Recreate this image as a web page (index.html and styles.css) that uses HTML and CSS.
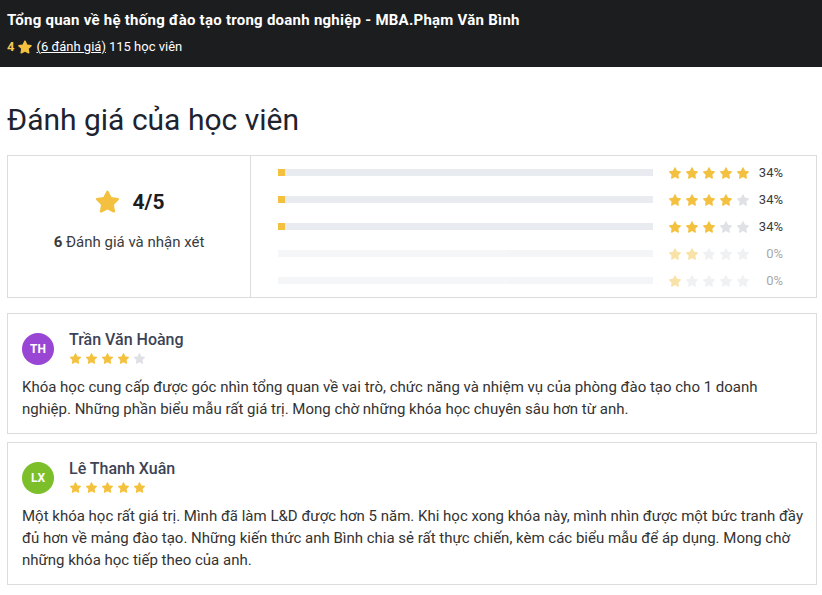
FILE: index.html
```html
<!DOCTYPE html>
<html lang="vi">
  <head>
    <meta charset="UTF-8" />
    <title>Đánh giá của học viên</title>
    <link rel="stylesheet" href="styles.css">
  </head>
  <body>
    <svg class="defs" width="0" height="0">
      <symbol id="star" viewBox="0 0 24 24">
        <path d="M12 2.2c.4 0 .7.2.9.6l2.6 5.3 5.8.8c.9.1 1.2 1.2.6 1.8l-4.2 4.1 1 5.8c.2.9-.8 1.6-1.6 1.1L12 19l-5.2 2.7c-.8.5-1.8-.2-1.6-1.1l1-5.8-4.2-4.1c-.6-.6-.3-1.7.6-1.8l5.8-.8 2.6-5.3c.2-.4.5-.6 1-.6z"/>
      </symbol>
    </svg>

    <header class="course-bar">
      <h1 class="course-title">Tổng quan về hệ thống đào tạo trong doanh nghiệp - MBA.Phạm Văn Bình</h1>
      <div class="course-meta">
        <span class="meta-score">4</span>
        <svg class="meta-star"><use href="#star"/></svg>
        <a href="#reviews">(6 đánh giá)</a> 115 học viên
      </div>
    </header>

    <main class="content" id="reviews">
      <h2 class="page-title">Đánh giá của học viên</h2>

      <!-- rating summary -->
      <section class="summary">
        <div class="summary-score">
          <div class="score-line">
            <svg class="score-star"><use href="#star"/></svg>
            <span class="score-value">4/5</span>
          </div>
          <p class="score-count"><b>6</b> Đánh giá và nhận xét</p>
        </div>
        <div class="summary-bars" id="bars"></div>
      </section>

      <!-- reviews -->
      <article class="review">
        <div class="review-head">
          <span class="avatar avatar-purple">TH</span>
          <div>
            <div class="review-name">Trần Văn Hoàng</div>
            <div class="stars small" data-rating="4"></div>
          </div>
        </div>
        <p class="review-text">Khóa học cung cấp được góc nhìn tổng quan về vai trò, chức năng và nhiệm vụ của phòng đào tạo cho 1 doanh nghiệp. Những phần biểu mẫu rất giá trị. Mong chờ những khóa học chuyên sâu hơn từ anh.</p>
      </article>

      <article class="review">
        <div class="review-head">
          <span class="avatar avatar-green">LX</span>
          <div>
            <div class="review-name">Lê Thanh Xuân</div>
            <div class="stars small" data-rating="5"></div>
          </div>
        </div>
        <p class="review-text">Một khóa học rất giá trị. Mình đã làm L&amp;D được hơn 5 năm. Khi học xong khóa này, mình nhìn được một bức tranh đầy đủ hơn về mảng đào tạo. Những kiến thức anh Bình chia sẻ rất thực chiến, kèm các biểu mẫu để áp dụng. Mong chờ những khóa học tiếp theo của anh.</p>
      </article>
    </main>

    <script>
      const breakdown = [
        { stars: 5, percent: 34 },
        { stars: 4, percent: 34 },
        { stars: 3, percent: 34 },
        { stars: 2, percent: 0 },
        { stars: 1, percent: 0 },
      ];

      function starIcons(count) {
        let html = "";
        for (let i = 1; i <= 5; i++) {
          const cls = i <= count ? "on" : "off";
          html += '<svg class="' + cls + '"><use href="#star"/></svg>';
        }
        return html;
      }

      const bars = document.getElementById("bars");
      breakdown.forEach((row) => {
        const div = document.createElement("div");
        div.className = "bar-row" + (row.percent === 0 ? " empty" : "");
        div.innerHTML =
          '<div class="bar"><div class="bar-fill" style="width:' +
          (row.percent ? 7 : 0) +
          'px"></div></div>' +
          '<div class="stars">' + starIcons(row.stars) + "</div>" +
          '<span class="bar-percent">' + row.percent + "%</span>";
        bars.appendChild(div);
      });

      document.querySelectorAll(".review .stars").forEach((el) => {
        el.innerHTML = starIcons(Number(el.dataset.rating));
      });
    </script>
  </body>
</html>
```

FILE: styles.css
```css
body {
  margin: 0;
  background: #fff;
  color: #1c1d1f;
  font-family: Roboto, "Open Sans", sans-serif;
}
.defs {
  position: absolute;
}
.course-bar {
  background: #1c1d1f;
  color: #fff;
  padding: 10px 7px 12px;
  height: 45px;
}
.course-title {
  margin: 0;
  font-size: 15px;
  font-weight: 700;
  line-height: 20px;
  letter-spacing: 0.25px;
}
.course-meta {
  margin-top: 8px;
  font-size: 13px;
  line-height: 18px;
  display: flex;
  align-items: center;
  gap: 3px;
}
.course-meta a {
  color: #fff;
  text-decoration: underline;
}
.meta-score {
  color: #f3ca55;
  font-weight: 700;
}
.meta-star {
  width: 16px;
  height: 16px;
  fill: #f3c13f;
}
.content {
  padding: 0 5px 10px 7px;
}
.page-title {
  margin: 34px 0 16px;
  font-size: 30px;
  font-weight: 400;
  line-height: 38px;
  color: #1e2330;
}
.summary {
  display: grid;
  grid-template-columns: 243px 1fr;
  border: 1px solid #dcdcdc;
  height: 141px;
}
.summary-score {
  border-right: 1px solid #dcdcdc;
  display: flex;
  flex-direction: column;
  align-items: center;
  justify-content: center;
  padding-bottom: 14px;
}
.score-line {
  display: flex;
  align-items: center;
  gap: 12px;
}
.score-star {
  width: 27px;
  height: 27px;
  fill: #f3c13f;
}
.score-value {
  font-size: 21px;
  font-weight: 700;
}
.score-count {
  margin: 18px 0 0;
  font-size: 15px;
  color: #3a3b3d;
}
.summary-bars {
  padding: 3px 33px 0 27px;
}
.bar-row {
  display: flex;
  align-items: center;
  height: 27px;
}
.bar-row.empty {
  opacity: 0.45;
}
.bar {
  flex: 1;
  height: 7px;
  background: #e8ebef;
}
.bar-fill {
  height: 100%;
  background: #f3c13f;
}
.stars {
  display: flex;
  gap: 3px;
  margin-left: 15px;
}
.stars svg {
  width: 14px;
  height: 14px;
}
.stars .on {
  fill: #f3c13f;
}
.stars .off {
  fill: #dfe1e4;
}
.bar-percent {
  width: 33px;
  text-align: right;
  font-size: 13px;
  color: #3a3b3d;
}
.review {
  border: 1px solid #dcdcdc;
  padding: 16px 9px 13px 14px;
  margin-top: 15px;
}
.review + .review {
  margin-top: 8px;
}
.review-head {
  display: flex;
  align-items: center;
  gap: 15px;
}
.avatar {
  width: 32px;
  height: 32px;
  border-radius: 50%;
  color: #fff;
  font-size: 12px;
  font-weight: 700;
  display: flex;
  align-items: center;
  justify-content: center;
  margin-top: 3px;
}
.avatar-purple {
  background: #9a46d4;
}
.avatar-green {
  background: #7cbf2a;
}
.review-name {
  font-size: 16px;
  font-weight: 500;
  line-height: 20px;
  color: #3c4356;
}
.stars.small {
  margin: 2px 0 0;
  gap: 3px;
}
.stars.small svg {
  width: 13px;
  height: 13px;
}
.review-text {
  margin: 11px 0 0;
  font-size: 15px;
  line-height: 22px;
  color: #333;
}
```
